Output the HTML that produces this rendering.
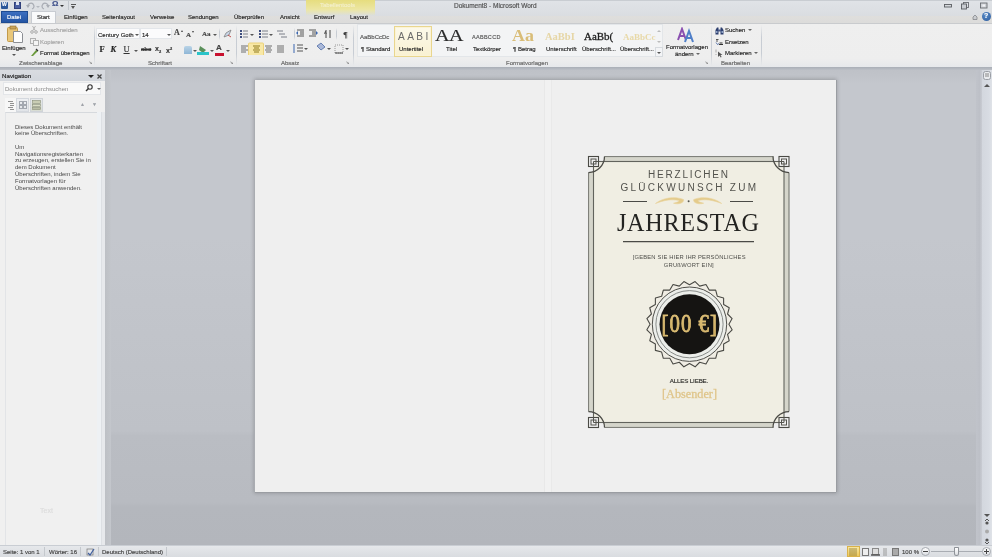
<!DOCTYPE html>
<html><head><meta charset="utf-8">
<style>
*{margin:0;padding:0;box-sizing:border-box}
html,body{width:992px;height:557px;overflow:hidden;will-change:transform;background:#c6c9d0;font-family:"Liberation Sans",sans-serif;color:#3c3c3c}
div,span,svg{position:absolute}
.t{font-size:6px;line-height:8px;white-space:nowrap;color:#262626;-webkit-text-stroke:.15px currentColor}
.g{color:#9a9a9a}
.lbl{font-size:6px;line-height:8px;white-space:nowrap;color:#6e6e6e;-webkit-text-stroke:.2px currentColor}
#title{left:0;top:0;width:992px;height:23px;background:linear-gradient(#c9cdd2 0,#c9cdd2 1px,#e0e3e7 1px,#dadde1 16px,#dfdedc 16px,#dcdcdb 23px)}
#ribbon{left:0;top:23px;width:992px;height:44px;background:linear-gradient(#efefef,#eeeeee 80%,#e6e8eb);border-top:1px solid #c9cbce}
#ribline{left:0;top:67px;width:992px;height:3px;background:linear-gradient(#a9aeb6,#bcc0c7)}
#nav{left:0;top:70px;width:105px;height:475px;background:#f0f0f0}
#doc{left:105px;top:70px;width:877px;height:475px;background:linear-gradient(#bec1c7 0,#c4c7cd 3%,#c4c7cd 35%,#bec1c7 76%,#babdc3 77%,#b8bbc1 91%,#b4b7bd 92%,#b3b6bc 100%)}
#vscroll{left:982px;top:70px;width:10px;height:475px;background:linear-gradient(90deg,#d3d7de,#d8dce3 70%,#e0e3e8)}
#status{left:0;top:545px;width:992px;height:12px;background:linear-gradient(#e6e8eb,#d9dce0);border-top:1px solid #c9cdd3}
#page{left:255px;top:80px;width:581px;height:412px;background:#efefef;box-shadow:0 1px 0 #9a9da2,1px 0 0 #9a9da2,-1px 0 0 #a9acb1,0 0 4px 1px rgba(0,0,0,.22)}
b.dd{display:inline-block;width:0;height:0;border-left:2px solid transparent;border-right:2px solid transparent;border-top:2px solid #666;vertical-align:middle;margin-left:1px}
b.du{display:inline-block;width:0;height:0;border-left:2px solid transparent;border-right:2px solid transparent;border-bottom:2px solid #666;vertical-align:middle}
.sep{width:1px;background:linear-gradient(rgba(200,205,212,0),#c8cdd4 30%,#c8cdd4 70%,rgba(200,205,212,0))}
</style></head><body>
<div id="title"></div>
<!-- contextual tab header -->
<div style="left:306px;top:0;width:69px;height:16px;background:linear-gradient(#e6dd7e,#ece6a3 60%,rgba(236,232,180,0))"></div>
<div class="t" style="left:320px;top:1px;color:#f3efc9">Tabellentools</div>
<div class="t" style="left:454px;top:1.5px;font-size:6.5px;color:#505050;-webkit-text-stroke:.15px currentColor">Dokument8 - Microsoft Word</div>
<!-- QAT -->
<div style="left:1px;top:2px;width:7px;height:7px;background:#2b579a;border-radius:1px"></div>
<div class="t" style="left:2px;top:0px;color:#fff;font-size:5px;font-weight:bold">W</div>
<div style="left:14px;top:2px;width:7px;height:7px;background:#4b5fa0;border:1px solid #30407a"></div>
<div style="left:16px;top:2px;width:3px;height:3px;background:#dfe4f0"></div>
<svg style="left:26px;top:2px" width="24" height="8" viewBox="0 0 24 8"><path d="M2 5 A3 3 0 1 1 6 7" fill="none" stroke="#a9adb5" stroke-width="1.2"/><path d="M0 3l2 3 2-3z" fill="#a9adb5"/><path d="M10 4l2 2 2-2z" fill="#b5b9c0"/><path d="M22 5 A3 3 0 1 0 18 7" fill="none" stroke="#a9adb5" stroke-width="1.2"/><path d="M24 3l-2 3-2-3z" fill="#a9adb5"/></svg>
<div class="t" style="left:52px;top:0px;color:#3d4f8a;font-size:8px;font-weight:bold">Ω</div>
<div style="left:60px;top:5px;width:0;height:0;border-left:2px solid transparent;border-right:2px solid transparent;border-top:2px solid #333"></div>
<div style="left:68px;top:1px;width:1px;height:9px;background:#c1c6cc"></div>
<div style="left:71px;top:4px;width:5px;height:1px;background:#555"></div><div style="left:71px;top:6px;width:0;height:0;border-left:2.5px solid transparent;border-right:2.5px solid transparent;border-top:3px solid #555"></div>
<!-- window buttons -->
<svg style="left:942px;top:1px" width="50" height="9" viewBox="0 0 50 9">
 <rect x="2.5" y="3.5" width="7" height="2.5" fill="#d6d9dd" stroke="#5a5d62" stroke-width=".9"/>
 <rect x="21.5" y="1.5" width="5" height="5" fill="none" stroke="#6a6d72" stroke-width=".9"/>
 <rect x="19.5" y="3" width="5" height="5" fill="#c9ccd1" stroke="#5a5d62" stroke-width=".9"/>
 <rect x="38.5" y="2" width="6.5" height="5" fill="#d0d3d8" stroke="#6a6d72" stroke-width=".9"/>
 <rect x="40.5" y="3.5" width="2.5" height="2" fill="#f2f3f5"/>
</svg>
<!-- tabs -->
<div style="left:1px;top:11px;width:27px;height:12px;background:linear-gradient(#3c6fc0,#2556a4);border:1px solid #1f4c93"></div>
<div class="t" style="left:7px;top:13px;color:#fff">Datei</div>
<div style="left:31px;top:11px;width:25px;height:13px;background:linear-gradient(#fafbfc,#f7f8f9);border:1px solid #c8ccd2;border-bottom:none"></div>
<div class="t" style="left:37px;top:13px">Start</div>
<div class="t" style="left:64px;top:13px">Einfügen</div>
<div class="t" style="left:102px;top:13px">Seitenlayout</div>
<div class="t" style="left:150px;top:13px">Verweise</div>
<div class="t" style="left:188px;top:13px">Sendungen</div>
<div class="t" style="left:234px;top:13px">Überprüfen</div>
<div class="t" style="left:280px;top:13px">Ansicht</div>
<div class="t" style="left:314px;top:13px">Entwurf</div>
<div class="t" style="left:350px;top:13px">Layout</div>
<svg style="left:972px;top:14px" width="6" height="6" viewBox="0 0 6 6"><path d="M1 5.5V3l2-2 2 2v2.5z" fill="#c9ccd0" stroke="#7a7d82" stroke-width=".7"/></svg>
<div style="left:982px;top:12px;width:9px;height:9px;border-radius:50%;background:radial-gradient(circle at 40% 35%,#5a8cc8,#2b5a9c)"></div>
<div class="t" style="left:984px;top:12px;color:#fff;font-size:7px;font-weight:bold">?</div>

<div id="ribbon"></div>
<div id="ribline"></div>
<!-- ===== RIBBON CONTENT ===== -->
<!-- Zwischenablage -->
<svg style="left:6px;top:25px" width="18" height="19" viewBox="0 0 18 19">
 <rect x="1.5" y="2.5" width="10" height="14" rx="1" fill="#e9c77a" stroke="#c29a4a"/>
 <rect x="4" y="1" width="6" height="3" fill="#c9a45a" stroke="#8e6d2c" stroke-width=".6"/>
 <path d="M7.5 6.5h7l2 2v9h-9z" fill="#fdfdfd" stroke="#8c8f94"/>
</svg>
<div class="t" style="left:2px;top:44px">Einfügen</div>
<div style="left:12px;top:54px;width:0;height:0;border-left:2px solid transparent;border-right:2px solid transparent;border-top:2px solid #555"></div>
<svg style="left:30px;top:26px" width="8" height="8" viewBox="0 0 8 8"><circle cx="2" cy="6" r="1.3" fill="none" stroke="#aaa"/><circle cx="6" cy="6" r="1.3" fill="none" stroke="#aaa"/><path d="M2.5 5L5.5 0M5.5 5L2.5 0" stroke="#b5b5b5"/></svg>
<div class="t g" style="left:40px;top:26px;color:#a5a5a5">Ausschneiden</div>
<svg style="left:30px;top:38px" width="9" height="8" viewBox="0 0 9 8"><rect x="0.5" y="0.5" width="5" height="5" fill="#eee" stroke="#b0b0b0"/><rect x="3.5" y="2.5" width="5" height="5" fill="#f4f4f4" stroke="#b0b0b0"/></svg>
<div class="t g" style="left:40px;top:38px;color:#a5a5a5">Kopieren</div>
<svg style="left:30px;top:48px" width="9" height="9" viewBox="0 0 9 9"><path d="M1 8 L6 2 L8 3 L3 8Z" fill="#6a9a3a"/><path d="M6 1l2 2" stroke="#333" stroke-width="1.2"/></svg>
<div class="t" style="left:40px;top:49px">Format übertragen</div>
<div class="lbl" style="left:19px;top:59px">Zwischenablage</div>
<div class="t" style="left:89px;top:59px;font-size:4px;color:#888">↘</div>
<div class="sep" style="left:94px;top:25px;height:41px"></div>

<!-- Schriftart -->
<div style="left:96px;top:28px;width:44px;height:11px;background:#fbfbfc;border:1px solid #e3e6ea"></div>
<div class="t" style="left:98px;top:31px;font-size:6px">Century Goth</div>
<div style="left:135px;top:34px;width:0;height:0;border-left:2px solid transparent;border-right:2px solid transparent;border-top:2px solid #555"></div>
<div style="left:140px;top:28px;width:32px;height:11px;background:#fbfbfc;border:1px solid #e3e6ea"></div>
<div class="t" style="left:142px;top:31px">14</div>
<div style="left:167px;top:34px;width:0;height:0;border-left:2px solid transparent;border-right:2px solid transparent;border-top:2px solid #555"></div>
<div class="t" style="left:174px;top:29px;font-size:8px;font-family:'Liberation Serif',serif;font-weight:bold;color:#444">A</div><div style="left:181px;top:30px;width:0;height:0;border-left:1.5px solid transparent;border-right:1.5px solid transparent;border-bottom:2px solid #444"></div>
<div class="t" style="left:186px;top:31px;font-size:7px;font-family:'Liberation Serif',serif;font-weight:bold;color:#444">A</div><div style="left:192px;top:31px;width:0;height:0;border-left:1.5px solid transparent;border-right:1.5px solid transparent;border-top:2px solid #444"></div>
<div class="t" style="left:202px;top:30px;font-size:7px;font-family:'Liberation Serif',serif;font-weight:bold;color:#444">Aa</div>
<div style="left:213px;top:34px;width:0;height:0;border-left:2px solid transparent;border-right:2px solid transparent;border-top:2px solid #555"></div>
<div class="sep" style="left:219px;top:28px;height:12px"></div>
<svg style="left:223px;top:29px" width="9" height="9" viewBox="0 0 9 9"><path d="M1 8l2-4 5-3-2 5z" fill="#c9d5e6" stroke="#777" stroke-width=".7"/><path d="M5 6l3 2" stroke="#c0504d"/></svg>
<div class="t" style="left:99.5px;top:45px;font-size:8.5px;line-height:9px;font-weight:bold;color:#222;font-family:'Liberation Serif',serif">F</div>
<div class="t" style="left:110.5px;top:45px;font-size:8.5px;line-height:9px;font-weight:bold;font-style:italic;color:#222;font-family:'Liberation Serif',serif">K</div>
<div class="t" style="left:123.5px;top:45px;font-size:8.5px;line-height:9px;text-decoration:underline;color:#333;font-family:'Liberation Serif',serif">U</div>
<div style="left:134px;top:50px;width:0;height:0;border-left:2px solid transparent;border-right:2px solid transparent;border-top:2px solid #555"></div>
<div class="t" style="left:141px;top:45px;font-size:6px;text-decoration:line-through;color:#333;font-weight:bold">abc</div>
<div class="t" style="left:155px;top:45px;font-size:7px;color:#333;font-weight:bold">x<sub style="font-size:4px">2</sub></div>
<div class="t" style="left:166px;top:45px;font-size:7px;color:#333;font-weight:bold">x<sup style="font-size:4px">2</sup></div>
<div style="left:184px;top:46px;width:8px;height:8px;background:linear-gradient(#b9d3e6,#8fb6d6);border-radius:2px 2px 0 0"></div>
<div style="left:193px;top:50px;width:0;height:0;border-left:2px solid transparent;border-right:2px solid transparent;border-top:2px solid #555"></div>
<svg style="left:197px;top:44px" width="12" height="11" viewBox="0 0 12 11"><path d="M3 2l6 4-3 3-4-3z" fill="#5a8f5a"/><rect x="0" y="8" width="12" height="3" fill="#2bc3c8"/></svg>
<div style="left:210px;top:50px;width:0;height:0;border-left:2px solid transparent;border-right:2px solid transparent;border-top:2px solid #555"></div>
<div class="t" style="left:216px;top:44px;font-size:8px;color:#444;font-weight:bold">A</div>
<div style="left:215px;top:53px;width:9px;height:3px;background:#c8102e"></div>
<div style="left:226px;top:50px;width:0;height:0;border-left:2px solid transparent;border-right:2px solid transparent;border-top:2px solid #555"></div>
<div class="lbl" style="left:148px;top:59px">Schriftart</div>
<div class="t" style="left:230px;top:59px;font-size:4px;color:#888">↘</div>
<div class="sep" style="left:236px;top:25px;height:41px"></div>

<!-- Absatz -->
<svg style="left:239px;top:29px" width="112" height="26" viewBox="0 0 112 26">
 <g fill="#3e4e7e">
  <rect x="1" y="1" width="2" height="2"/><rect x="1" y="4" width="2" height="2"/><rect x="1" y="7" width="2" height="2"/>
  <rect x="20" y="1" width="2" height="2"/><rect x="20" y="4" width="2" height="2"/><rect x="20" y="7" width="2" height="2"/>
 </g>
 <g stroke="#7a7f88" stroke-width="1">
  <path d="M4 2h5M4 5h5M4 8h5"/>
  <path d="M23 2h6M23 5h6M23 8h6"/>
  <path d="M38 2h6M40 5h6M42 8h6"/>
 </g>
 <path d="M11 5h4l-2 2zM30 5h4l-2 2z" fill="#555"/>
 <g stroke="#555"><path d="M58 1h7M61 3h4M61 5h4M58 7h7M70 1h7M73 3h4M73 5h4M70 7h7"/></g>
 <path d="M57 4l2-2v4zM79 4l-2-2v4z" fill="#3a66b0"/>
 <path d="M87 1v8M91 1v8" stroke="#444"/><text x="85" y="5" font-size="4" fill="#444">A</text>
 <text x="104" y="9" font-size="9" font-weight="bold" fill="#3a3a3a" font-family="Liberation Serif">¶</text>
 <g stroke="#6f6f6f">
  <path d="M2 17h7M2 19h5M2 21h7M2 23h5"/>
  <path d="M26 17h7M27 19h5M26 21h7M27 23h5"/>
  <path d="M38 17h7M38 19h7M38 21h7M38 23h7"/>
 </g>
 <rect x="9.5" y="14" width="15" height="13" rx="1" fill="#f8e8a6" stroke="#ecd27a"/>
 <path d="M14 17h7M15 19h5M14 21h7M15 23h5" stroke="#8f7a1c"/>
 <path d="M58 16h6M58 19h6M58 22h6" stroke="#555"/><path d="M55 15v9" stroke="#3a66b0"/>
 <path d="M65 19h4l-2 2z" fill="#555"/>
 <path d="M78 17l4-3 4 4-4 3z" fill="#aab8d8" stroke="#3e5e9e" stroke-width=".7"/><path d="M88 19h4l-2 2z" fill="#555"/>
 <rect x="96" y="16" width="8" height="8" fill="none" stroke="#999" stroke-dasharray="1 1"/><path d="M96 24h8" stroke="#444"/><path d="M106 19h4l-2 2z" fill="#555"/>
</svg>
<div class="sep" style="left:294px;top:28px;height:12px"></div>
<div class="sep" style="left:336px;top:28px;height:12px"></div>
<div class="lbl" style="left:281px;top:59px">Absatz</div>
<div class="t" style="left:346px;top:59px;font-size:4px;color:#888">↘</div>
<div class="sep" style="left:353px;top:25px;height:41px"></div>

<!-- Formatvorlagen gallery -->
<div style="left:357px;top:24px;width:306px;height:33px;background:#f3f4f5;border:1px solid #e3e6e9"></div>
<div style="left:394px;top:26px;width:38px;height:31px;background:linear-gradient(#fcf9ea,#f9f1d2);border:1px solid #e9d68e;box-shadow:inset 0 0 0 1px #fbf3d6"></div>
<div class="t" style="left:360px;top:33px;font-size:6px;color:#555">AaBbCcDc</div>
<div class="t" style="left:361px;top:45px">¶ Standard</div>
<div class="t" style="left:398px;top:30px;font-size:11px;line-height:12px;color:#6a6a6a;letter-spacing:2.6px;font-weight:normal;-webkit-text-stroke:0;transform:scaleX(.92);transform-origin:0 0">AABI</div>
<div class="t" style="left:399px;top:45px">Untertitel</div>
<div class="t" style="left:435px;top:27px;font-size:17px;line-height:17px;font-family:'Liberation Serif',serif;color:#2a2a2a;letter-spacing:-0.5px;transform:scaleX(1.18);transform-origin:0 0">AA</div>
<div class="t" style="left:446px;top:45px">Titel</div>
<div class="t" style="left:472px;top:33px;font-size:5.5px;color:#555;letter-spacing:.3px">AABBCCD</div>
<div class="t" style="left:473px;top:45px">Textkörper</div>
<div class="t" style="left:512px;top:28px;font-size:16px;line-height:16px;font-family:'Liberation Serif',serif;font-weight:bold;color:#d9bd78;-webkit-text-stroke:0;transform:scaleX(1.12);transform-origin:0 0">Aa</div>
<div class="t" style="left:513px;top:45px">¶ Betrag</div>
<div class="t" style="left:545px;top:31px;font-size:10.5px;line-height:12px;font-family:'Liberation Serif',serif;font-weight:bold;color:#e6d6a6;-webkit-text-stroke:0">AaBbI</div>
<div class="t" style="left:546px;top:45px">Unterschrift</div>
<div class="t" style="left:584px;top:31px;font-size:10.5px;line-height:12px;font-family:'Liberation Serif',serif;color:#222;-webkit-text-stroke:.3px currentColor;transform:scaleX(1.04);transform-origin:0 0">AaBb(</div>
<div class="t" style="left:582px;top:45px">Überschrift...</div>
<div class="t" style="left:623px;top:32px;font-size:9px;line-height:10px;font-family:'Liberation Serif',serif;font-weight:bold;color:#e8d9a8;-webkit-text-stroke:0">AaBbCc</div>
<div class="t" style="left:620px;top:45px">Überschrift...</div>
<div style="left:655px;top:47px;width:8px;height:10px;background:#f3f4f6;border:1px solid #d6dade"></div>
<div style="left:657px;top:52px;width:0;height:0;border-left:2px solid transparent;border-right:2px solid transparent;border-top:2px solid #555"></div>
<div style="left:657px;top:30px;width:0;height:0;border-left:2px solid transparent;border-right:2px solid transparent;border-bottom:2px solid #bbb"></div>
<div style="left:657px;top:41px;width:0;height:0;border-left:2px solid transparent;border-right:2px solid transparent;border-top:2px solid #bbb"></div>
<svg style="left:677px;top:27px" width="18" height="16" viewBox="0 0 18 16">
 <path d="M1 13 L5 2 L9 13 M3 9h4" stroke="#8a4fb0" stroke-width="2" fill="none"/>
 <path d="M8 15 L12 4 L16 15 M10 11h4" stroke="#4f7fc8" stroke-width="2" fill="none"/>
</svg>
<div class="t" style="left:666px;top:43px">Formatvorlagen</div>
<div class="t" style="left:675px;top:50px">ändern <b class="dd"></b></div>
<div class="lbl" style="left:506px;top:59px">Formatvorlagen</div>
<div class="t" style="left:705px;top:59px;font-size:4px;color:#888">↘</div>
<div class="sep" style="left:711px;top:25px;height:41px"></div>

<!-- Bearbeiten -->
<svg style="left:715px;top:27px" width="9" height="8" viewBox="0 0 9 8"><path d="M0.5 7.5V3L2 0.5h1.5V7.5z M5.5 7.5V0.5H7L8.5 3V7.5z" fill="#2d3f6e"/><rect x="3" y="2.5" width="3" height="2" fill="#4a5a88"/><rect x="1" y="4" width="1.5" height="2" fill="#8fa3c8"/><rect x="6.5" y="4" width="1.5" height="2" fill="#8fa3c8"/></svg>
<div class="t" style="left:725px;top:26px">Suchen <b class="dd"></b></div>
<svg style="left:715px;top:38px" width="9" height="8" viewBox="0 0 9 8"><path d="M1 1.5h2.5M1 3h2" stroke="#444" stroke-width=".9"/><path d="M1 4.5l1.5 2 1.5-1" fill="none" stroke="#3e5e9e" stroke-width=".8"/><path d="M4 6.5h4M4.5 5h3" stroke="#333" stroke-width="1"/></svg>
<div class="t" style="left:725px;top:38px">Ersetzen</div>
<svg style="left:715px;top:49px" width="9" height="9" viewBox="0 0 9 9"><path d="M1 0.5v3M1 5v1" stroke="#9a9a9a" stroke-width=".8"/><path d="M3 2.5v5.5l1.5-1.5 1.2 2 .9-.5-1.1-2h2z" fill="#555"/></svg>
<div class="t" style="left:725px;top:49px">Markieren <b class="dd"></b></div>
<div class="lbl" style="left:721px;top:59px">Bearbeiten</div>
<div class="sep" style="left:761px;top:25px;height:41px"></div>

<div id="nav"></div>
<div id="doc"></div>
<div id="vscroll"></div>
<div id="status"></div>
<!-- ===== NAV PANE ===== -->
<div style="left:0;top:70px;width:105px;height:11px;background:linear-gradient(#d9dce1,#d2d6dc)"></div>
<div class="t" style="left:2px;top:72px;color:#222;font-size:6.2px">Navigation</div>
<div style="left:88px;top:75px;width:0;height:0;border-left:3px solid transparent;border-right:3px solid transparent;border-top:3px solid #222"></div>
<svg style="left:96px;top:73px" width="7" height="7" viewBox="0 0 7 7"><path d="M1.5 1.5l4 4M5.5 1.5l-4 4" stroke="#444" stroke-width="1.2"/></svg>
<div style="left:3px;top:82px;width:98px;height:13px;background:#f9f9f9;border:1px solid #e4e6e9"></div>
<div class="t" style="left:5px;top:85px;color:#8a8a8a;-webkit-text-stroke:0">Dokument durchsuchen</div>
<svg style="left:85px;top:84px" width="8" height="8" viewBox="0 0 8 8"><circle cx="5" cy="3" r="2.2" fill="none" stroke="#333" stroke-width="1.1"/><path d="M3.5 4.5L1 7" stroke="#333" stroke-width="1.4"/></svg>
<div style="left:97px;top:88px;width:0;height:0;border-left:2px solid transparent;border-right:2px solid transparent;border-top:2px solid #666"></div>
<!-- tab buttons -->
<div style="left:5px;top:98px;width:11px;height:14px;background:#f7f7f7"></div>
<svg style="left:7px;top:100px" width="8" height="10" viewBox="0 0 8 10"><path d="M1 1.5h5M3 3.5h4M3 5.5h4M1 7.5h5M3 9.5h4" stroke="#666" stroke-width=".7"/></svg>
<div style="left:16px;top:98px;width:13px;height:14px;background:linear-gradient(#eef0f3,#e1e4e8);border:1px solid #d4d8de"></div>
<svg style="left:19px;top:101px" width="8" height="8" viewBox="0 0 8 8"><rect x="0.5" y="0.5" width="3" height="3" fill="none" stroke="#a3a8b0"/><rect x="4.5" y="0.5" width="3" height="3" fill="none" stroke="#a3a8b0"/><rect x="0.5" y="4.5" width="3" height="3" fill="none" stroke="#a3a8b0"/><rect x="4.5" y="4.5" width="3" height="3" fill="none" stroke="#a3a8b0"/></svg>
<div style="left:30px;top:98px;width:13px;height:14px;background:linear-gradient(#e6e9ec,#d8dcd2);border:1px solid #cfd3d8"></div>
<svg style="left:32px;top:100px" width="9" height="10" viewBox="0 0 9 10"><rect x="0.5" y="0.5" width="8" height="3" fill="#c9cdb4" stroke="#8a8f78" stroke-width=".6"/><rect x="0.5" y="4.5" width="8" height="2" fill="#d9ddc4" stroke="#8a8f78" stroke-width=".6"/><rect x="0.5" y="7.5" width="8" height="2" fill="#b9bda4" stroke="#8a8f78" stroke-width=".6"/></svg>
<div class="t" style="left:80px;top:100px;font-size:5px;color:#a0a4aa">▲</div>
<div class="t" style="left:92px;top:100px;font-size:5px;color:#a0a4aa">▼</div>
<!-- content panel -->
<div style="left:5px;top:112px;width:92px;height:433px;background:#f0f0f0;border-left:1px solid #e2e4e7;border-top:1px solid #d6d9dd"></div>
<div class="t" style="left:15px;top:123.5px;line-height:6.8px;color:#484848;-webkit-text-stroke:0">Dieses Dokument enthält<br>keine Überschriften.<br><br>Um<br>Navigationsregisterkarten<br>zu erzeugen, erstellen Sie in<br>dem Dokument<br>Überschriften, indem Sie<br>Formatvorlagen für<br>Überschriften anwenden.</div>
<div class="t" style="left:40px;top:507px;font-size:7px;color:#dcdcdc">Text</div>
<!-- splitter -->
<div style="left:97px;top:112px;width:8px;height:433px;background:linear-gradient(90deg,#eef1f4,#eef1f4 45%,#dde0e4 45%,#dde0e4 58%,#e7e9ec 58%)"></div>
<div style="left:105px;top:70px;width:6px;height:475px;background:linear-gradient(90deg,#bdc0c5,#c1c4c9 70%,#c3c6cc)"></div>

<!-- ===== SCROLLBAR ===== -->
<div style="left:976px;top:70px;width:6px;height:475px;background:linear-gradient(90deg,#c0c3ca,#bdc0c7 60%,#c9ccd3)"></div>
<svg style="left:982px;top:70px" width="10" height="20" viewBox="0 0 10 20"><rect x="1.5" y="1.5" width="7" height="8" rx="2" fill="#e9ebee" stroke="#9a9ea5"/><path d="M3 4h4M3 6h4" stroke="#888"/><path d="M2 17l3-3 3 3z" fill="#555"/></svg>
<svg style="left:982px;top:510px" width="10" height="35" viewBox="0 0 10 35"><path d="M2 4l3 3 3-3z" fill="#555"/><circle cx="5" cy="13" r="1.6" fill="#555"/><path d="M3 11l2-2 2 2" stroke="#555" fill="none"/><circle cx="5" cy="21.5" r="2" fill="#aaa"/><circle cx="5" cy="30" r="1.6" fill="#555"/><path d="M3 32l2 2 2-2" stroke="#555" fill="none"/></svg>

<!-- ===== STATUS BAR ===== -->
<div class="t" style="left:3px;top:548px;color:#444">Seite: 1 von 1</div>
<div style="left:44px;top:547px;width:1px;height:9px;background:#c4c8cd"></div>
<div class="t" style="left:49px;top:548px;color:#444">Wörter: 16</div>
<div style="left:80px;top:547px;width:1px;height:9px;background:#c4c8cd"></div>
<svg style="left:86px;top:547px" width="9" height="9" viewBox="0 0 9 9"><rect x="1" y="2" width="6" height="6" fill="#e4e6ea" stroke="#777" stroke-width=".7"/><path d="M2 6l2 2 4-6" stroke="#3e5e9e" fill="none" stroke-width="1.2"/></svg>
<div style="left:98px;top:547px;width:1px;height:9px;background:#c4c8cd"></div>
<div class="t" style="left:102px;top:548px;color:#444">Deutsch (Deutschland)</div>
<div style="left:166px;top:547px;width:1px;height:9px;background:#c4c8cd"></div>
<!-- view buttons -->
<div style="left:847px;top:546px;width:13px;height:11px;background:linear-gradient(#f8e7a0,#eec95a);border:1px solid #d9b24a"></div>
<svg style="left:849px;top:548px" width="9" height="8" viewBox="0 0 9 8"><path d="M1 0v8M3 0v8M5 0v8M7 0v8" stroke="#8a7a3a" stroke-width=".8"/></svg>
<svg style="left:861px;top:547px" width="40" height="10" viewBox="0 0 40 10"><rect x="1.5" y="1.5" width="6" height="7" fill="#eee" stroke="#777"/><rect x="11.5" y="1.5" width="6" height="6" fill="#ddd" stroke="#888"/><path d="M10 8h9" stroke="#555" stroke-width="1.5"/><path d="M22 2h4M22 4h4M22 6h4M22 8h4" stroke="#999"/><rect x="31.5" y="1.5" width="6" height="7" fill="#aaa" stroke="#777"/></svg>
<div class="t" style="left:902px;top:548px;color:#444">100 %</div>
<div style="left:921px;top:547px;width:9px;height:9px;border-radius:50%;background:linear-gradient(#fdfdfd,#dcdfe3);border:1px solid #a7abb1"></div>
<div style="left:923px;top:551px;width:5px;height:1px;background:#444"></div>
<div style="left:931px;top:551px;width:51px;height:1px;background:#a9adb3"></div>
<div style="left:954px;top:547px;width:5px;height:9px;background:linear-gradient(#fff,#dcdfe3);border:1px solid #8e9298;border-radius:1px 1px 3px 3px"></div>
<div style="left:982px;top:547px;width:9px;height:9px;border-radius:50%;background:linear-gradient(#fdfdfd,#dcdfe3);border:1px solid #a7abb1"></div>
<div style="left:984px;top:551px;width:5px;height:1px;background:#444"></div>
<div style="left:986px;top:549px;width:1px;height:5px;background:#444"></div>

<div id="page"></div>

<!-- ===== PAGE DETAILS ===== -->
<div style="left:544px;top:80px;width:1px;height:412px;background:#e8e8e8"></div>
<div style="left:545px;top:80px;width:6px;height:412px;background:#f1f1f1"></div>
<div style="left:551px;top:80px;width:1px;height:412px;background:#e9e9e9"></div>
<!-- ===== CERTIFICATE ===== -->
<svg style="left:580px;top:148px;will-change:transform" width="220" height="290" viewBox="580 148 220 290">
 <defs>
  <linearGradient id="gold" x1="0" y1="0" x2="0" y2="1"><stop offset="0" stop-color="#e2c77f"/><stop offset="1" stop-color="#c9a659"/></linearGradient>
 </defs>
 <clipPath id="fc"><path d="M604.5 156 H773.5 A16 16 0 0 0 790 172.5 V411.5 A16 16 0 0 0 773.5 428 H604.5 A16 16 0 0 0 588 411.5 V172.5 A16 16 0 0 0 604.5 156 Z"/></clipPath>
 <g clip-path="url(#fc)">
  <rect x="591" y="159" width="195.5" height="266" fill="none" stroke="#d5d5cb" stroke-width="5"/>
  <rect x="588.5" y="156.5" width="200.5" height="271" fill="none" stroke="#7f807a" stroke-width="1.2"/>
 </g>
 <rect x="593.5" y="161.5" width="190.5" height="261" fill="#f0eee3" stroke="#62635d" stroke-width="1.1"/>
 <g fill="none" stroke="#4a4a45" stroke-width="1.25">
  <path d="M604.5 156.5 A16 16 0 0 1 588.5 172.5"/>
  <path d="M773 156.5 A16 16 0 0 0 789 172.5"/>
  <path d="M588.5 411.5 A16 16 0 0 1 604.5 427.5"/>
  <path d="M789 411.5 A16 16 0 0 0 773 427.5"/>
 </g>
 <g fill="#efefef" stroke="#4a4a45" stroke-width="1.1">
  <rect x="588.5" y="156.5" width="10" height="10"/>
  <rect x="779" y="156.5" width="10" height="10"/>
  <rect x="588.5" y="417.5" width="10" height="10"/>
  <rect x="779" y="417.5" width="10" height="10"/>
 </g>
 <g fill="none" stroke="#55554f" stroke-width="1">
  <rect x="591" y="159" width="5" height="5"/>
  <rect x="781.5" y="159" width="5" height="5"/>
  <rect x="591" y="420" width="5" height="5"/>
  <rect x="781.5" y="420" width="5" height="5"/>
  <path d="M593.5 161.5 v5 M593.5 161.5 h5 M784 161.5 v5 M784 161.5 h-5 M593.5 422.5 v-5 M593.5 422.5 h5 M784 422.5 v-5 M784 422.5 h-5"/>
 </g>
 <!-- heading text -->
 <g font-family="Liberation Sans" fill="#52524d">
  <text x="648" y="178" font-size="10" textLength="80" lengthAdjust="spacing">HERZLICHEN</text>
  <text x="620.5" y="190.6" font-size="10" textLength="135.5" lengthAdjust="spacing">GLÜCKWUNSCH ZUM</text>
 </g>
 <g stroke="#4a4a46" stroke-width="1.2">
  <path d="M623 201.5 H647 M730 201.5 H753"/>
  <path d="M623 241.6 H754"/>
 </g>
 <g fill="#e4cb8b" stroke="#e9d49d" stroke-width=".6">
  <path d="M655.5 203.5 C663 197.5 675 196 683.5 199.5 C684.5 202.5 679 205 673.5 203.2 C676.5 202.6 679 201.8 679.2 200.6 C672 198.8 664 200.2 655.5 203.5 Z"/>
  <path transform="translate(1377.2 0) scale(-1 1)" d="M655.5 203.5 C663 197.5 675 196 683.5 199.5 C684.5 202.5 679 205 673.5 203.2 C676.5 202.6 679 201.8 679.2 200.6 C672 198.8 664 200.2 655.5 203.5 Z"/>
 </g>
 <circle cx="688.6" cy="201.3" r="1" fill="#55554f"/>
 <text transform="translate(617 230.5) scale(0.93 1)" x="0" y="0" font-family="Liberation Serif" font-size="26" fill="#232321" textLength="152.69" lengthAdjust="spacing">JAHRESTAG</text>
 <g font-family="Liberation Sans" fill="#4e4e4a" font-size="5.8">
  <text x="632.7" y="259.3" textLength="112.8" lengthAdjust="spacing">[GEBEN SIE HIER IHR PERSÖNLICHES</text>
  <text x="663.7" y="266.8" textLength="50" lengthAdjust="spacing">GRUßWORT EIN]</text>
  <text x="669.8" y="383.2" font-size="6.2" textLength="38.5" lengthAdjust="spacing" fill="#2e2e2b" stroke="#2e2e2b" stroke-width=".15">ALLES LIEBE.</text>
 </g>
 <!-- seal -->
 <path d="M689.50 284.80 L695.11 281.57 L699.70 286.14 L705.96 284.47 L709.20 290.08 L715.68 290.09 L717.36 296.34 L723.61 298.02 L723.62 304.50 L729.23 307.74 L727.56 314.00 L732.13 318.59 L728.90 324.20 L732.13 329.81 L727.56 334.40 L729.23 340.66 L723.62 343.90 L723.61 350.38 L717.36 352.06 L715.68 358.31 L709.20 358.32 L705.96 363.93 L699.70 362.26 L695.11 366.83 L689.50 363.60 L683.89 366.83 L679.30 362.26 L673.04 363.93 L669.80 358.32 L663.32 358.31 L661.64 352.06 L655.39 350.38 L655.38 343.90 L649.77 340.66 L651.44 334.40 L646.87 329.81 L650.10 324.20 L646.87 318.59 L651.44 314.00 L649.77 307.74 L655.38 304.50 L655.39 298.02 L661.64 296.34 L663.32 290.09 L669.80 290.08 L673.04 284.47 L679.30 286.14 L683.89 281.57Z" fill="#f0ede4" stroke="#4a4a45" stroke-width="1.1" stroke-linejoin="round"/>
 <circle cx="689.5" cy="324.2" r="37.2" fill="#eceeea" stroke="#4f4f4a" stroke-width="1"/>
 <circle cx="689.5" cy="324.2" r="33.6" fill="none" stroke="#7d807e" stroke-width=".9"/>
 <circle cx="689.5" cy="324.2" r="30" fill="#151412"/>
 <text transform="translate(661.5 331.5) scale(0.80 1)" x="0" y="0" font-family="Liberation Serif" font-size="26" fill="url(#gold)" stroke="#dcbd74" stroke-width="0.9" textLength="69.38" lengthAdjust="spacing">[00 €]</text>
 <text x="662" y="397.5" font-family="Liberation Serif" font-size="11.5" fill="#dcc084" stroke="#e2ca92" stroke-width="0.3" textLength="55" lengthAdjust="spacingAndGlyphs">[Absender]</text>
</svg>

</body></html>
